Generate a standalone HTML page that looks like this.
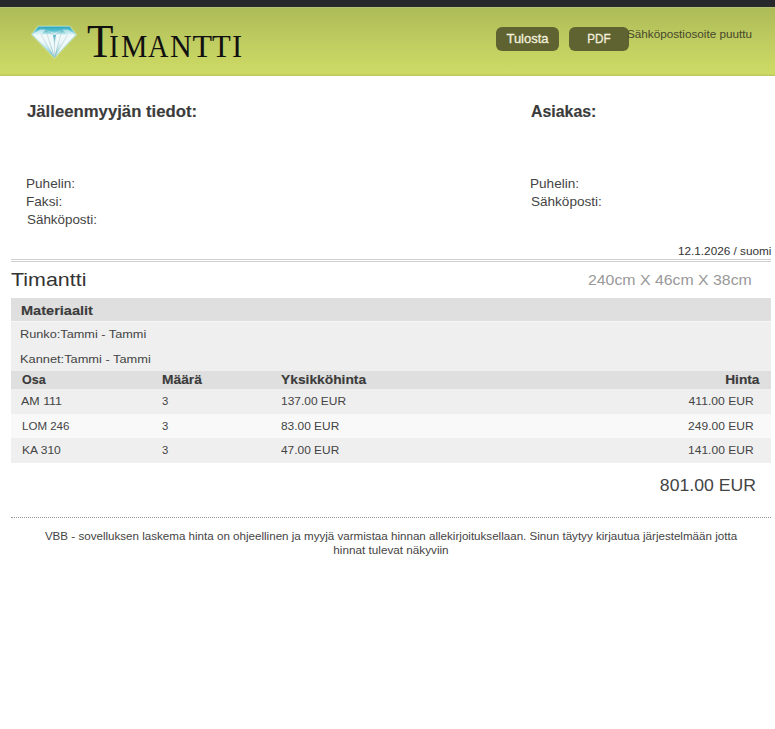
<!DOCTYPE html>
<html><head><meta charset="utf-8">
<style>
html,body{margin:0;padding:0;background:#fff;width:775px;height:729px;overflow:hidden;}
body{font-family:"Liberation Sans",sans-serif;color:#444;position:relative;}
.a{position:absolute;white-space:nowrap;line-height:1;}
#top{position:absolute;left:0;top:0;width:775px;height:7px;background:linear-gradient(#25272b 0,#26282b 5px,#2b2d24 7px);}
#hdr{position:absolute;left:0;top:7px;width:775px;height:69px;background:linear-gradient(#b4c07f 0,#b4c07f 1px,#adbb58 1px,#bfcc60 34px,#cddb65 67px,#bcc95f 68px,#bcc95f 69px);}
.btn{position:absolute;top:27px;height:24px;background:#5f6332;border-radius:6px;color:#f4f0dc;font-size:13px;line-height:24px;text-align:center;-webkit-text-stroke:0.3px #f4f0dc;}
.logo{font-family:"Liberation Serif",serif;color:#111;}
.box{position:absolute;left:11px;width:760px;}
</style></head><body>
<div id="top"></div>
<div id="hdr"></div>
<svg style="position:absolute;left:0;top:0" width="100" height="70" viewBox="0 0 100 70">
  <defs>
    <linearGradient id="cr" gradientUnits="userSpaceOnUse" x1="0" y1="26" x2="0" y2="35"><stop offset="0" stop-color="#1ea2b9"/><stop offset="0.55" stop-color="#5cc3d1"/><stop offset="1" stop-color="#e4f5f7"/></linearGradient>
    <linearGradient id="pv" gradientUnits="userSpaceOnUse" x1="0" y1="38" x2="0" y2="58"><stop offset="0" stop-color="#f6fcfc" stop-opacity="0"/><stop offset="1" stop-color="#2eb0c4"/></linearGradient>
    <linearGradient id="cv" gradientUnits="userSpaceOnUse" x1="0" y1="35" x2="0" y2="50"><stop offset="0" stop-color="#1ea2b9"/><stop offset="1" stop-color="#e9f7f8" stop-opacity="0"/></linearGradient>
  </defs>
  <polygon points="38.4,26.2 69.6,26.2 76.3,34.8 54.5,57.9 31.7,34.4" fill="#e6f2c0" opacity="0.55" stroke="#e6f2c0" stroke-width="1.6" stroke-linejoin="round"/>
  <polygon points="38.4,26.4 69.6,26.4 76,34.8 54.5,57.6 32,34.4" fill="#f0f9fa"/>
  <polygon points="38.4,26.4 69.6,26.4 76,34.8 32,34.4" fill="url(#cr)"/>
  <polygon points="32,34.4 40,29.5 45.8,29.7 41,34.5" fill="#eaf7f8" opacity="0.7"/>
  <polygon points="76,34.8 68,29.5 62.2,29.7 67.5,34.7" fill="#eaf7f8" opacity="0.6"/>
  <polygon points="45.8,29.7 54.5,35.1 62.2,29.7 54.2,33" fill="#e9f7f8" opacity="0.5"/>
  <polygon points="32,34.4 41,34.5 54.5,57.6" fill="url(#pv)"/><polygon points="45.8,36 50,40 54.5,57.6" fill="url(#pv)"/>
  <polygon points="58,42 67.5,34.7 54.5,57.6" fill="url(#pv)"/>
  <polygon points="53.3,35.1 55.7,35.1 54.5,50" fill="url(#cv)"/>
  <g stroke="#98b4bb" stroke-width="0.5" fill="none" opacity="0.75">
    <polyline points="38.4,26.4 45.8,29.7 54.5,35.1 62.2,29.7 69.6,26.4"/>
    <line x1="41" y1="34.5" x2="54.5" y2="57.6"/>
    <line x1="45.8" y1="29.7" x2="54.5" y2="57.6"/>
    <line x1="54.5" y1="35.1" x2="54.5" y2="57.6"/>
    <line x1="62.2" y1="29.7" x2="54.5" y2="57.6"/>
    <line x1="67.5" y1="34.7" x2="54.5" y2="57.6"/>
  </g>
  <polygon points="38.4,26.4 69.6,26.4 76,34.8 54.5,57.6 32,34.4" fill="none" stroke="#7fc9d3" stroke-width="0.6"/>
</svg>
<div class="a logo" style="left:87.22px;top:19.3px;font-size:46px;transform-origin:0 0;transform:scaleX(0.94)">T</div>
<div class="a logo" style="left:109.24px;top:30.20px;font-size:32px;transform-origin:0 0;transform:scaleX(0.92)">I</div>
<div class="a logo" style="left:121.37px;top:30.20px;font-size:32px;transform-origin:0 0;transform:scaleX(0.93)">M</div>
<div class="a logo" style="left:147.75px;top:30.20px;font-size:32px;transform-origin:0 0;transform:scaleX(0.885)">A</div>
<div class="a logo" style="left:169.66px;top:30.20px;font-size:32px;transform-origin:0 0;transform:scaleX(0.94)">N</div>
<div class="a logo" style="left:192.42px;top:30.20px;font-size:32px;transform-origin:0 0;transform:scaleX(1.0)">T</div>
<div class="a logo" style="left:211.85px;top:30.20px;font-size:32px;transform-origin:0 0;transform:scaleX(0.96)">T</div>
<div class="a logo" style="left:231.91px;top:30.20px;font-size:32px;transform-origin:0 0;transform:scaleX(0.95)">I</div>
<div class="btn" style="left:496px;width:63px;">Tulosta</div>
<div class="btn" style="left:569px;width:60px;"><span style="display:inline-block;transform:scaleX(0.9);margin-left:-1px">PDF</span></div>

<div class="box" style="top:259px;height:1px;background:#d0d0d0"></div>
<div class="box" style="top:261px;height:1px;background:#d0d0d0"></div>

<div class="box" style="top:298px;height:23px;background:#dfdfdf"></div>
<div class="box" style="top:321px;height:1px;background:#f6f6f6"></div>
<div class="box" style="top:322px;height:49px;background:#efefef"></div>
<div class="box" style="top:371px;height:18px;background:#dfdfdf"></div>
<div class="box" style="top:389px;height:25px;background:#efefef"></div>
<div class="box" style="top:414px;height:24px;background:#f9f9f9"></div>
<div class="box" style="top:438px;height:25px;background:#efefef"></div>
<div class="box" style="top:517px;height:0;border-top:1px dotted #999"></div>
<div class="a" style="top:29.11px;font-size:10.5px;color:#45472c;left:626.88px;transform-origin:0 0;transform:scaleX(1.1147);">Sähköpostiosoite puuttu</div>
<div class="a" style="top:102.61px;font-size:17px;color:#3b3b3b;font-weight:bold;-webkit-text-stroke:0.15px #3b3b3b;left:26.50px;transform-origin:0 0;transform:scaleX(0.9837);">Jälleenmyyjän tiedot:</div>
<div class="a" style="top:102.61px;font-size:17px;color:#3b3b3b;font-weight:bold;-webkit-text-stroke:0.15px #3b3b3b;left:530.76px;transform-origin:0 0;transform:scaleX(0.9350);">Asiakas:</div>
<div class="a" style="top:177.00px;font-size:13px;color:#444;left:25.70px;transform-origin:0 0;transform:scaleX(1.0440);">Puhelin:</div>
<div class="a" style="top:195.00px;font-size:13px;color:#444;left:25.70px;transform-origin:0 0;transform:scaleX(1.0463);">Faksi:</div>
<div class="a" style="top:213.00px;font-size:13px;color:#444;left:26.50px;transform-origin:0 0;transform:scaleX(1.0301);">Sähköposti:</div>
<div class="a" style="top:177.00px;font-size:13px;color:#444;left:529.70px;transform-origin:0 0;transform:scaleX(1.0440);">Puhelin:</div>
<div class="a" style="top:195.00px;font-size:13px;color:#444;left:530.50px;transform-origin:0 0;transform:scaleX(1.0419);">Sähköposti:</div>
<div class="a" style="top:246.11px;font-size:10.5px;color:#333;right:4.00px;transform-origin:100% 0;transform:scaleX(1.1205);">12.1.2026 / suomi</div>
<div class="a" style="top:271.14px;font-size:18.5px;color:#333;left:11.00px;transform-origin:0 0;transform:scaleX(1.1580);">Timantti</div>
<div class="a" style="top:272.73px;font-size:14.5px;color:#999;left:587.50px;transform-origin:0 0;transform:scaleX(1.0926);">240cm X 46cm X 38cm</div>
<div class="a" style="top:304.00px;font-size:13px;color:#3b3b3b;font-weight:bold;-webkit-text-stroke:0.15px #3b3b3b;left:21.24px;transform-origin:0 0;transform:scaleX(1.1190);">Materiaalit</div>
<div class="a" style="top:329.07px;font-size:11.5px;color:#444;left:20.42px;transform-origin:0 0;transform:scaleX(1.1062);">Runko:Tammi - Tammi</div>
<div class="a" style="top:354.07px;font-size:11.5px;color:#444;left:20.42px;transform-origin:0 0;transform:scaleX(1.1138);">Kannet:Tammi - Tammi</div>
<div class="a" style="top:373.00px;font-size:13px;color:#3b3b3b;font-weight:bold;-webkit-text-stroke:0.15px #3b3b3b;left:21.50px;transform-origin:0 0;transform:scaleX(0.9600);">Osa</div>
<div class="a" style="top:373.00px;font-size:13px;color:#3b3b3b;font-weight:bold;-webkit-text-stroke:0.15px #3b3b3b;left:161.72px;transform-origin:0 0;transform:scaleX(1.0611);">Määrä</div>
<div class="a" style="top:373.00px;font-size:13px;color:#3b3b3b;font-weight:bold;-webkit-text-stroke:0.15px #3b3b3b;left:281.26px;transform-origin:0 0;transform:scaleX(1.0617);">Yksikköhinta</div>
<div class="a" style="top:373.00px;font-size:13px;color:#3b3b3b;font-weight:bold;-webkit-text-stroke:0.15px #3b3b3b;right:15.02px;transform-origin:100% 0;transform:scaleX(1.0554);">Hinta</div>
<div class="a" style="top:396.07px;font-size:11.5px;color:#444;left:21.24px;transform-origin:0 0;transform:scaleX(1.0822);">AM 111</div>
<div class="a" style="top:396.07px;font-size:11.5px;color:#444;left:162.00px;transform-origin:0 0;transform:scaleX(0.9805);">3</div>
<div class="a" style="top:396.07px;font-size:11.5px;color:#444;left:281.00px;transform-origin:0 0;transform:scaleX(1.0388);">137.00 EUR</div>
<div class="a" style="top:396.07px;font-size:11.5px;color:#444;right:21.48px;transform-origin:100% 0;transform:scaleX(1.0559);">411.00 EUR</div>
<div class="a" style="top:421.07px;font-size:11.5px;color:#444;left:21.60px;transform-origin:0 0;transform:scaleX(1.0025);">LOM 246</div>
<div class="a" style="top:421.07px;font-size:11.5px;color:#444;left:162.00px;transform-origin:0 0;transform:scaleX(0.9805);">3</div>
<div class="a" style="top:421.07px;font-size:11.5px;color:#444;left:281.00px;transform-origin:0 0;transform:scaleX(1.0357);">83.00 EUR</div>
<div class="a" style="top:421.07px;font-size:11.5px;color:#444;right:21.48px;transform-origin:100% 0;transform:scaleX(1.0469);">249.00 EUR</div>
<div class="a" style="top:445.07px;font-size:11.5px;color:#444;left:21.60px;transform-origin:0 0;transform:scaleX(1.0459);">KA 310</div>
<div class="a" style="top:445.07px;font-size:11.5px;color:#444;left:162.00px;transform-origin:0 0;transform:scaleX(0.9805);">3</div>
<div class="a" style="top:445.07px;font-size:11.5px;color:#444;left:281.00px;transform-origin:0 0;transform:scaleX(1.0357);">47.00 EUR</div>
<div class="a" style="top:445.07px;font-size:11.5px;color:#444;right:21.48px;transform-origin:100% 0;transform:scaleX(1.0477);">141.00 EUR</div>
<div class="a" style="top:477.03px;font-size:16.5px;color:#444;right:18.96px;transform-origin:100% 0;transform:scaleX(1.0687);">801.00 EUR</div>
<div class="a" style="top:531.11px;font-size:10.5px;color:#444;left:-9.15px;width:800px;text-align:center;transform-origin:0 0;transform-origin:50% 0;transform:scaleX(1.1043);">VBB - sovelluksen laskema hinta on ohjeellinen ja myyjä varmistaa hinnan allekirjoituksellaan. Sinun täytyy kirjautua järjestelmään jotta</div>
<div class="a" style="top:545.11px;font-size:10.5px;color:#444;left:-9.03px;width:800px;text-align:center;transform-origin:0 0;transform-origin:50% 0;transform:scaleX(1.1156);">hinnat tulevat näkyviin</div>
</body></html>
